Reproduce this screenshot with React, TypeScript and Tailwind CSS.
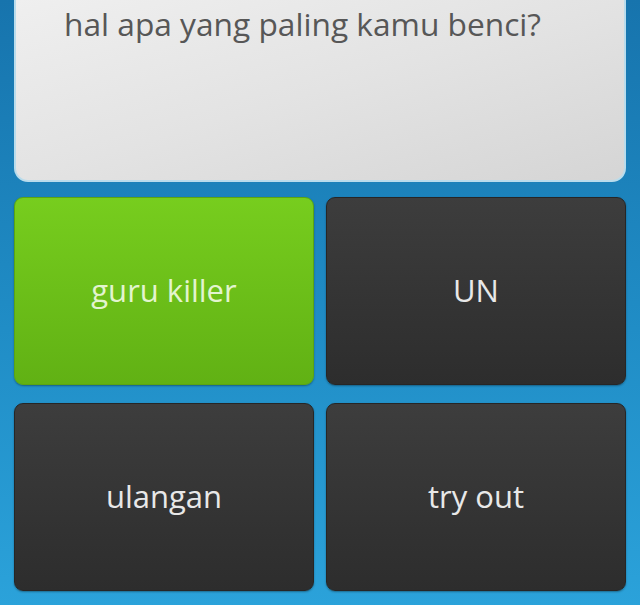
import React from "react";

const answers = [
  { label: "guru killer", selected: true },
  { label: "UN", selected: false },
  { label: "ulangan", selected: false },
  { label: "try out", selected: false },
];

function AnswerTile({ label, selected }: { label: string; selected: boolean }) {
  return (
    <button
      className={
        selected
          ? "h-full w-full rounded-[9px] bg-gradient-to-b from-[#77cd1e] to-[#61b114] border border-[#5aa512] shadow-[0_1px_2px_rgba(0,0,0,0.35)] text-[#e3f4cf] text-[31px] flex items-center justify-center"
          : "h-full w-full rounded-[9px] bg-gradient-to-b from-[#3d3d3d] to-[#2d2d2d] border border-[#262626] shadow-[0_1px_2px_rgba(0,0,0,0.35)] text-[#e8e8e8] text-[31px] flex items-center justify-center"
      }
      style={{ fontFamily: '"Open Sans", "Noto Sans", sans-serif' }}
    >
      <span className="-mt-[2px]">{label}</span>
    </button>
  );
}

export default function App() {
  return (
    <div
      className="w-[640px] h-[605px] overflow-hidden bg-gradient-to-b from-[#1774ad] via-[#1f8bc4] to-[#2ba2da] px-[14px] flex flex-col"
      style={{ fontFamily: '"Open Sans", "Noto Sans", sans-serif' }}
    >
      <div className="h-[182px] shrink-0 rounded-b-[14px] bg-gradient-to-br from-[#efefef] via-[#e3e3e3] to-[#d5d5d5] border-x-2 border-b-2 border-[#b9dcec] pl-[48px] pt-[4px]">
        <p className="text-[31.7px] leading-[40px] text-[#575757]">
          hal apa yang paling kamu benci?
        </p>
      </div>
      <div className="mt-[15px] grid grid-cols-2 grid-rows-[188px_188px] gap-x-[12px] gap-y-[18px]">
        {answers.map((a) => (
          <AnswerTile key={a.label} label={a.label} selected={a.selected} />
        ))}
      </div>
    </div>
  );
}
